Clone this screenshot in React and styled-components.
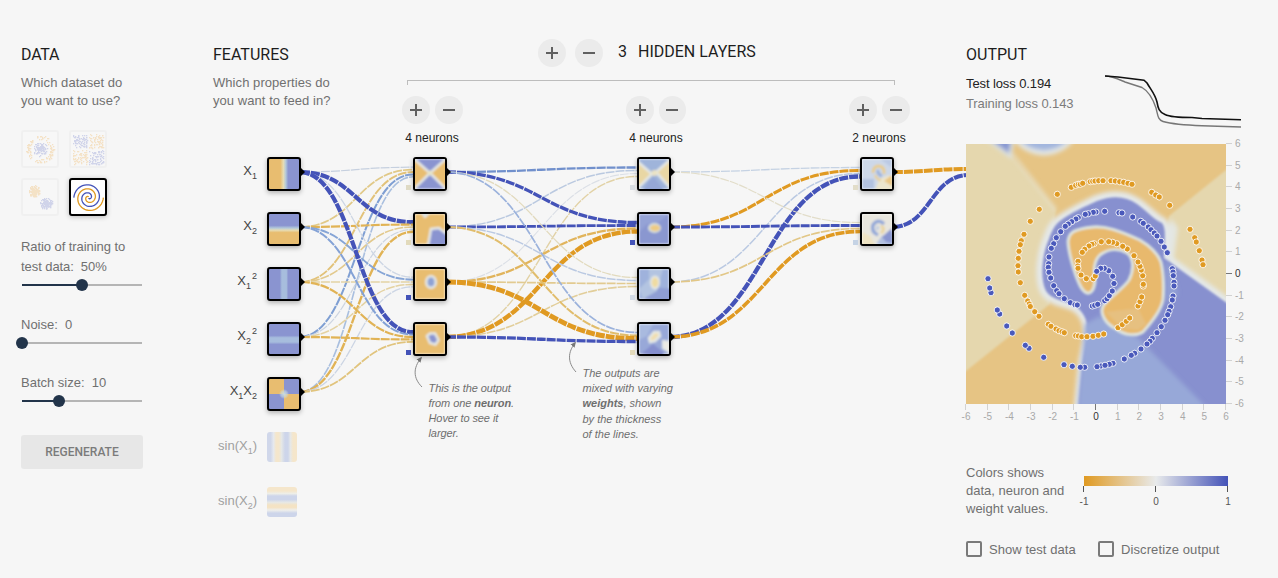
import React from "react";
import styled, { createGlobalStyle } from "styled-components";

const BLUE = "#4453b8";
const ORANGE = "#e09a22";
const HB = "#8a94d0";
const HO = "#e8bd70";
const PALE = "#e4e8e6";

const Global = createGlobalStyle`
  * { box-sizing: border-box; }
  body { margin: 0; background: #f6f6f6; font-family: "Liberation Sans", Arial, sans-serif; color: #6c6c6c; }
`;

const Page = styled.main`
  position: relative;
  display: flex;
  width: 1278px;
  height: 578px;
  overflow: hidden;
  background: #f6f6f6;
  font-size: 13px;
`;

const DataColumn = styled.section`
  display: flex;
  flex-direction: column;
  width: 213px;
  padding: 44px 0 0 21px;
`;
const FeatureColumn = styled.section`
  display: flex;
  flex-direction: column;
  width: 189px;
  padding-top: 44px;
`;
const NetworkColumn = styled.section`
  display: flex;
  flex-direction: column;
  width: 564px;
  padding-top: 39px;
`;
const OutputColumn = styled.section`
  display: flex;
  flex-direction: column;
  width: 312px;
  padding-top: 44px;
  position: relative;
`;

const Title = styled.h4`
  margin: 0;
  font: 400 16px/21px Roboto, sans-serif;
  color: #1d1d1d;
  letter-spacing: ${(p) => p.$spacing || "0"};
  white-space: pre;
`;
const Question = styled.p`
  margin: 9px 0 0;
  line-height: 18px;
  letter-spacing: 0.06px;
  color: #707070;
`;

const ThumbGrid = styled.div`
  display: grid;
  grid-template-columns: 38px 38px;
  gap: 10px;
  margin-top: 20px;
`;
const Thumb = styled.div`
  width: 38px;
  height: 38px;
  border: 2px solid ${(p) => (p.$selected ? "#000" : "#f0f0f0")};
  border-radius: 3px;
  background: ${(p) => (p.$selected ? "#fff" : "#f7f7f7")};
  box-shadow: ${(p) => (p.$selected ? "0 1px 5px rgba(0,0,0,0.25)" : "none")};
  svg { display: block; }
`;

const Control = styled.div`
  margin-top: ${(p) => p.$top}px;
  line-height: 20px;
  white-space: pre;
  letter-spacing: ${(p) => p.$spacing || "0"};
  color: #707070;
`;
const Track = styled.div`
  position: relative;
  width: 120px;
  height: 2px;
  margin: 7px 0 0 1px;
  background: linear-gradient(90deg, #22344a ${(p) => p.$fill}px, #b5b5b5 ${(p) => p.$fill}px);
`;
const Handle = styled.span`
  position: absolute;
  top: -5px;
  left: ${(p) => p.$at - 6}px;
  width: 12px;
  height: 12px;
  border-radius: 50%;
  background: #22344a;
`;
const Regenerate = styled.button`
  width: 122px;
  height: 34px;
  margin-top: 33px;
  padding: 0;
  border: 0;
  border-radius: 3px;
  background: #e7e7e7;
  font: 500 12px Roboto, sans-serif;
  color: #7b7b7b;
`;

const FeatureList = styled.div`
  display: flex;
  flex-direction: column;
  margin-top: 47px;
`;
const FeatureRow = styled.div`
  position: relative;
  z-index: 1;
  display: flex;
  align-items: flex-start;
  gap: 10px;
  height: 55px;
`;
const FeatureLabel = styled.div`
  width: 44px;
  line-height: 28px;
  font-size: 13px;
  text-align: right;
  color: ${(p) => (p.$off ? "#a0a0a0" : "#444")};
  white-space: nowrap;
  sub, sup { font-size: 9px; line-height: 0; position: relative; vertical-align: baseline; }
  sub { top: 4px; }
  sup { top: -6px; margin-left: 1px; }
`;

const Tile = styled.div`
  position: relative;
  flex: none;
  width: ${(p) => (p.$off ? 30 : 34)}px;
  height: ${(p) => (p.$off ? 30 : 34)}px;
  border: ${(p) => (p.$off ? "0" : "2px solid #000")};
  border-radius: 3px;
  background: ${(p) => p.$fill || "#fff"};
  box-shadow: ${(p) => (p.$off ? "none" : "0 2px 5px rgba(0,0,0,0.28)")};
  > svg { display: block; }
`;
const Tip = styled.span`
  position: absolute;
  left: 31px;
  top: 8px;
  border-left: 5px solid #000;
  border-top: 5px solid transparent;
  border-bottom: 5px solid transparent;
`;
const Bias = styled.span`
  position: absolute;
  left: -9px;
  top: 26px;
  width: 5px;
  height: 5px;
  background: ${(p) => p.$color};
`;

const LayerHeader = styled.div`
  display: flex;
  align-items: center;
  margin-left: 136px;
  height: 28px;
`;
const Round = styled.button`
  display: grid;
  place-items: center;
  width: 28px;
  height: 28px;
  margin: 0 ${(p) => p.$gap || 0}px 0 0;
  padding: 0;
  border: 0;
  border-radius: 50%;
  background: #ebebeb;
`;
const LayerTitle = styled(Title)`
  display: flex;
  gap: 11px;
  margin-top: -3px;
`;
const Bracket = styled.div`
  width: 488px;
  height: 5px;
  margin: 13px 0 0 5px;
  border: 1px solid #bdbdbd;
  border-bottom: 0;
`;
const Layers = styled.div`
  display: flex;
  gap: 163px;
  margin-top: 11px;
`;
const Layer = styled.div`
  position: relative;
  z-index: 1;
  width: ${(p) => p.$width}px;
`;
const Buttons = styled.div`
  display: flex;
`;
const Count = styled.div`
  width: 60px;
  margin-top: 5px;
  font-size: 12px;
  line-height: 18px;
  color: #222;
  text-align: center;
`;
const NodeStack = styled.div`
  display: flex;
  flex-direction: column;
  gap: 21px;
  margin: 10px 0 0 11px;
`;

const Links = styled.svg`
  position: absolute;
  left: 0;
  top: 0;
`;
const Callout = styled.div`
  position: absolute;
  left: ${(p) => p.$x}px;
  top: ${(p) => p.$y}px;
  font-size: 11px;
  font-style: italic;
  line-height: ${(p) => p.$line}px;
  letter-spacing: ${(p) => p.$spacing || "0"};
  color: #6e6e6e;
  white-space: nowrap;
`;

const OutputHead = styled.div`
  display: flex;
  justify-content: space-between;
  height: 79px;
  width: 276px;
`;
const Loss = styled.div`
  line-height: 20px;
  letter-spacing: -0.1px;
  color: ${(p) => p.$color};
`;
const LossList = styled.div`
  margin-top: 9px;
`;
const LossChart = styled.svg`
  margin-top: 26px;
`;
const Plot = styled.svg`
  display: block;
  overflow: visible;
  margin-top: 21px;
  position: relative;
  z-index: 1;
`;
const LegendRow = styled.div`
  display: flex;
  margin-top: 60px;
`;
const LegendText = styled.div`
  width: 110px;
  line-height: 18px;
  color: #707070;
`;
const Checks = styled.div`
  display: flex;
  margin-top: 22px;
`;
const Check = styled.label`
  display: flex;
  align-items: center;
  width: 132px;
  gap: 7px;
  height: 18px;
  letter-spacing: ${(p) => p.$spacing};
  color: #707070;
  white-space: nowrap;
`;
const Box = styled.span`
  width: 16px;
  height: 16px;
  border: 2px solid #7a7a7a;
  border-radius: 2px;
`;

function Sign({ plus }) {
  return (
    <svg width="12" height="12" viewBox="0 0 12 12" stroke="#606060" strokeWidth="2">
      <path d={plus ? "M0 6H12M6 0V12" : "M0 6H12"} />
    </svg>
  );
}

/* ---- dataset thumbnails ---- */
function random(seed) {
  let s = seed;
  return () => {
    s = (s * 16807) % 2147483647;
    return s / 2147483647;
  };
}
function blob(seed, n, cx, cy, r) {
  const rnd = random(seed);
  return Array.from({ length: n }, () => {
    const a = rnd() * Math.PI * 2;
    const d = rnd() * r;
    return [Math.round(cx + d * Math.cos(a)), Math.round(cy + d * Math.sin(a))];
  });
}
function ring(seed, n, cx, cy, r0, r1) {
  const rnd = random(seed);
  return Array.from({ length: n }, () => {
    const a = rnd() * Math.PI * 2;
    const d = r0 + rnd() * (r1 - r0);
    return [Math.round(cx + d * Math.cos(a)), Math.round(cy + d * Math.sin(a))];
  });
}
function square(seed, n, x, y, w) {
  const rnd = random(seed);
  return Array.from({ length: n }, () => [Math.round(x + rnd() * w), Math.round(y + rnd() * w)]);
}
const Specks = ({ pts, color }) => pts.map(([x, y], i) => <rect key={i} x={x} y={y} width="1.3" height="1.3" fill={color} />);
const PB = "#d0d4ea";
const PO = "#f4e2c6";

function spiral(turn) {
  const pts = [];
  for (let i = 0; i <= 70; i++) {
    const t = (i / 70) * 3.5 * Math.PI;
    const r = 14.2 * (1 - i / 70) + 0.6;
    pts.push(`${(17.6 + r * Math.cos(t + turn)).toFixed(2)},${(17.6 + r * Math.sin(t + turn)).toFixed(2)}`);
  }
  return pts.join(" ");
}

function Datasets() {
  return (
    <ThumbGrid>
      <Thumb>
        <svg width="34" height="34">
          <Specks pts={ring(17, 110, 17, 17, 10, 14)} color={PO} />
          <Specks pts={blob(23, 110, 17, 17, 7)} color={PB} />
        </svg>
      </Thumb>
      <Thumb>
        <svg width="34" height="34">
          <Specks pts={square(5, 75, 2, 2, 14)} color={PB} />
          <Specks pts={square(7, 75, 18, 2, 14)} color={PO} />
          <Specks pts={square(11, 75, 2, 18, 14)} color={PO} />
          <Specks pts={square(13, 75, 18, 18, 14)} color={PB} />
        </svg>
      </Thumb>
      <Thumb>
        <svg width="34" height="34">
          <Specks pts={blob(31, 150, 11, 11, 6)} color={PO} />
          <Specks pts={blob(37, 150, 23, 23, 6)} color={PB} />
        </svg>
      </Thumb>
      <Thumb $selected>
        <svg width="34" height="34" fill="none" strokeWidth="1.3">
          <polyline points={spiral(0)} stroke={ORANGE} />
          <polyline points={spiral(Math.PI)} stroke={BLUE} />
        </svg>
      </Thumb>
    </ThumbGrid>
  );
}

/* ---- feature tiles ---- */
const cross = `radial-gradient(circle at 50% 50%, #c9dbe0 0, rgba(201,219,224,0.6) 3px, transparent 5px),
  conic-gradient(${HB} 0 88deg, #b9bfa0 90deg, ${HO} 92deg 178deg, #b9bfa0 180deg, ${HB} 182deg 268deg, #b9bfa0 270deg, ${HO} 272deg 358deg, #b9bfa0 360deg)`;
const features = [
  { label: <>X<sub>1</sub></>, fill: `linear-gradient(90deg, ${HO} 38%, #e6dcb4 48%, #b3c9da 56%, ${HB} 64%)` },
  { label: <>X<sub>2</sub></>, fill: `linear-gradient(180deg, ${HB} 38%, #b3c9da 47%, #e6dcb4 54%, ${HO} 62%)` },
  { label: <>X<sub>1</sub><sup>2</sup></>, fill: `linear-gradient(90deg, ${HB} 36%, #a7bddd 43% 58%, ${HB} 64%)` },
  { label: <>X<sub>2</sub><sup>2</sup></>, fill: `linear-gradient(180deg, ${HB} 38%, #a7bddd 46% 60%, ${HB} 68%)` },
  { label: <>X<sub>1</sub>X<sub>2</sub></>, fill: cross },
  { off: true, label: <>sin(X<sub>1</sub>)</>, fill: "linear-gradient(90deg, #d0d7ea 12%, #e6e9ee 22%, #f4e6cc 30% 40%, #e6e8e6 48%, #cdd5ea 60% 70%, #e6e8e8 78%, #f5e6cb 87%)" },
  { off: true, label: <>sin(X<sub>2</sub>)</>, fill: "linear-gradient(180deg, #f5e6cb 13%, #eeeee8 22%, #cdd5ea 30% 42%, #e6e8e6 51%, #f4e3c4 60% 68%, #efefec 77%, #cdd5ea 87%)" },
];

/* ---- hidden neuron pictures ---- */
const art = {
  a0: (
    <>
      <rect width="30" height="30" fill={HB} />
      <path d="M-3 -2L15 14L-3 32Z M33 -2L15 14L33 32Z" fill={HO} stroke={PALE} strokeWidth="2.5" />
      <circle cx="15" cy="14" r="2.5" fill="#e6e4c8" />
    </>
  ),
  a1: (
    <>
      <rect width="30" height="30" fill={HO} />
      <path d="M13 32L16 15L24 14L33 21V33Z" fill={HB} stroke={PALE} strokeWidth="2.5" />
      <path d="M6 -2L10 3L15 -2Z" fill="#cdd9dc" stroke={PALE} strokeWidth="2" />
    </>
  ),
  a2: (
    <>
      <rect width="30" height="30" fill={HO} />
      <ellipse cx="16" cy="13" rx="6" ry="7" fill={PALE} />
      <ellipse cx="16" cy="13" rx="3.500" ry="4.500" fill="#8fa2d4" />
    </>
  ),
  a3: (
    <>
      <rect width="30" height="30" fill={HO} />
      <path d="M12 12L15 9.500L20 9.500L23.500 16L20.500 20.500L15 19Z" fill={HB} stroke={PALE} strokeWidth="2.5" />
    </>
  ),
  b0: (
    <>
      <rect width="30" height="30" fill="#9fb4da" />
      <path d="M-3 1L13 15L-3 31Z M33 -1L17 13L33 31Z" fill="#e9d7a4" stroke={PALE} strokeWidth="2.5" />
      <path d="M10 22L15 18L25 32H4Z" fill="#96a8d7" />
      <circle cx="15.500" cy="14" r="3" fill="#ebe3c4" />
    </>
  ),
  b1: (
    <>
      <rect width="30" height="30" fill="#8a97d0" />
      <path d="M0 0H30L20 8L8 10L0 18Z" fill="#95a3d6" />
      <ellipse cx="15.500" cy="14" rx="6.500" ry="5" fill="#d5dfe0" />
      <ellipse cx="16" cy="14" rx="5" ry="3.300" fill="#edcb84" />
    </>
  ),
  b2: (
    <>
      <rect width="30" height="30" fill="#9fb2dc" />
      <path d="M2 30L14 18L33 20V33Z" fill="#8f9ed4" />
      <path d="M0 20L10 10V0H24L18 22L4 30Z" fill="#b3c4e1" />
      <ellipse cx="16" cy="13.500" rx="5" ry="7" fill={PALE} />
      <ellipse cx="16" cy="13.500" rx="3.300" ry="5" fill="#efdba2" />
    </>
  ),
  b3: (
    <>
      <rect width="30" height="30" fill="#98a8d8" />
      <path d="M2 30L14 20L24 28V33Z" fill="#858fce" />
      <path d="M0 0H14L8 12L0 16Z" fill="#a9badf" />
      <path d="M10 14L15 8L20 8L21 12L16 17L11 18Z" fill="#f0deb0" stroke={PALE} strokeWidth="2.500" />
      <path d="M24 17L33 18V30L24 24Z" fill="#ecebe4" stroke={PALE} strokeWidth="2" />
    </>
  ),
  c0: (
    <>
      <rect width="30" height="30" fill="#cdd8e8" />
      <path d="M0 20H12V30H0Z" fill="#b2c2e0" />
      <path d="M18 0H30V9Z" fill="#bccae4" />
      <path d="M13 32L17 20L27 16L33 20V32Z" fill="#ece5cd" />
      <path d="M22 22L30 16V27Z" fill="#eac683" />
      <path d="M11 14Q11 7 17 7Q23 8 22 15" fill="none" stroke="#e9cd90" strokeWidth="3" />
      <path d="M13 16Q15 21 19 21" fill="none" stroke="#e8d09c" strokeWidth="2.500" />
      <path d="M16 11Q15 15 20 17" fill="none" stroke="#9db2db" strokeWidth="3" />
    </>
  ),
  c1: (
    <>
      <rect width="30" height="30" fill="#e8e6de" />
      <path d="M0 18L8 22L14 32H0Z" fill="#eee3c3" />
      <path d="M14 30L20 22L33 18V33Z" fill="#b3c1e0" />
      <path d="M20 23L30 14V29L24 28Z" fill="#8a96d0" />
      <path d="M16 21Q9 18 11 11Q16 4 22 10" fill="none" stroke="#93a8d8" strokeWidth="3.500" />
      <path d="M16 12L15 16" fill="none" stroke="#c2cee2" strokeWidth="3" />
      <path d="M19 12Q24 15 19 19" fill="none" stroke="#ead5a0" strokeWidth="3" />
    </>
  ),
};

function Neuron({ kind, bias }) {
  return (
    <Tile>
      <svg width="30" height="30">
        <g filter="url(#soften)">{art[kind]}</g>
      </svg>
      <Bias $color={bias} />
      <Tip />
    </Tile>
  );
}

const layers = [
  { width: 61, count: "4 neurons", nodes: [["a0", "#dfdac4"], ["a1", "#e2dabb"], ["a2", BLUE], ["a3", BLUE]] },
  { width: 60, count: "4 neurons", nodes: [["b0", "#d8dde2"], ["b1", BLUE], ["b2", "#d2dae6"], ["b3", "#e3dabb"]] },
  { width: 61, count: "2 neurons", nodes: [["c0", "#e2ddc9"], ["c1", "#c5d3e5"]] },
];

/* ---- connections: for each target, one [colour, width] per source ---- */
const stages = [
  {
    from: 299, to: 413,
    targets: [
      [["#c6d0df", 1.2], ["#e1c988", 1.7], ["#e2c279", 1.9], ["#7f9fd3", 2], ["#a9bfdf", 1.6]],
      [[BLUE, 4.2], ["#e1b355", 2.2], ["#e2c98d", 1.6], ["#cdd5e1", 1.2], ["#e1b355", 2.4]],
      [["#cdd6e4", 1.3], ["#86a5d6", 1.9], ["#e3d3a5", 1.5], ["#e4d2a2", 1.5], ["#ccd5e4", 1.3]],
      [[BLUE, 4.2], ["#84a2d6", 2], ["#e1b355", 2.2], ["#e1b355", 2.2], ["#e1c47d", 1.8]],
    ],
  },
  {
    from: 445, to: 637,
    targets: [
      [["#7190cc", 2.3], ["#bac9e0", 1.5], ["#dbdfe6", 1.1], ["#e2d2a6", 1.4]],
      [[BLUE, 3.3], [BLUE, 2.8], ["#e1b45c", 2.3], [ORANGE, 4.4]],
      [["#e2dabd", 1.3], ["#bac9e2", 1.5], ["#e2ca90", 1.7], ["#e2ce9a", 1.6]],
      [["#9bb2dc", 1.7], ["#e1bd6c", 2], [ORANGE, 4.9], [BLUE, 3.3]],
    ],
  },
  {
    from: 669, to: 860,
    targets: [
      [["#c5d2e3", 1.3], [ORANGE, 3.1], ["#bac9e2", 1.5], [BLUE, 4.3]],
      [["#e2ddc9", 1.2], [BLUE, 2.9], ["#e2c787", 1.7], [ORANGE, 3.6]],
    ],
  },
  { from: 892, to: 969, targets: [[[ORANGE, 4], [BLUE, 4]]] },
];

function Connections() {
  const paths = [];
  stages.forEach(({ from, to, targets }, s) =>
    targets.forEach((sources, t) =>
      sources.forEach(([color, width], i) => {
        const y0 = 172 + 55 * i;
        const y1 = 172 + 55 * t + ((i - (sources.length - 1) / 2) / sources.length) * 12;
        const mid = (from + to) / 2;
        paths.push(
          <path key={`${s}-${t}-${i}`} d={`M${from} ${y0}C${mid} ${y0} ${mid} ${y1} ${to} ${y1}`} stroke={color} strokeWidth={width} />
        );
      })
    )
  );
  return (
    <Links width="1278" height="578" fill="none">
      <defs>
        <filter id="soften" x="-5%" y="-5%" width="110%" height="110%">
          <feGaussianBlur stdDeviation="0.8" />
        </filter>
        <marker id="head" markerWidth="7" markerHeight="7" refX="4" refY="3" orient="auto">
          <path d="M0 0.500L5.500 3L0 5.500Z" fill="#777" />
        </marker>
      </defs>
      <g strokeDasharray="9 1" strokeDashoffset="-1.8">{paths}</g>
      <g stroke="#8b8b8b" strokeWidth="1">
        <path d="M422 387C413 378 413 368 421 358" markerEnd="url(#head)" />
        <path d="M576 372C567 362 568 352 575 343" markerEnd="url(#head)" />
      </g>
    </Links>
  );
}

/* ---- output plot ---- */
const orangeDots = [
  [105.3, 43.3], [109.7, 41.3], [112.3, 40.3], [114.3, 40.3], [116.7, 39.3], [124.3, 37.7], [126.7, 37.3], [129, 37], [132.7, 36.7], [137, 36.7],
  [145, 36.7], [149.3, 37], [153.7, 37.7], [157.7, 38.3], [162, 39.3], [166, 40.3], [185.7, 48.3], [189.7, 51], [193.3, 53], [203.7, 61.3],
  [224, 85.3], [228.7, 93.7], [230.3, 98], [233.3, 106.7], [236, 116], [237, 120.7],
  [91.3, 50.3], [73.3, 65.3], [64.3, 77.3], [58, 90.3], [55.3, 96.7], [54.3, 100.7], [53, 107.3], [52.3, 114.3], [52, 121.7], [52.3, 128], [54.3, 138.7],
  [58.7, 151.3], [61.7, 157], [63.3, 160], [64.3, 162.5], [68.7, 167.7], [73, 172.3], [82.3, 180.3], [85, 182.3], [90, 185], [93, 186.7], [96, 187.7], [98.3, 188.7],
  [109.7, 191.7], [112.3, 192], [115.7, 192.7], [121, 192.7], [127, 192.3], [132.3, 191.3], [137.7, 190],
  [152, 183.7], [156.3, 180.7], [160.3, 177.3], [163.7, 174], [172, 162], [174, 157.7], [175.7, 153], [177.3, 142], [177.3, 140.3],
  [176.7, 131.7], [175.3, 126], [174, 122.3], [172, 118], [168, 111.7], [161.3, 105], [156.7, 102.3], [150.7, 99.7], [146.7, 98.3], [142.7, 97.7],
  [135.3, 97.7], [128, 99.7], [126, 100.3], [123, 102], [118.7, 105.3], [116.3, 108.3], [112, 117.3], [111.7, 122], [112, 124.3], [115, 131], [127.3, 134.7], [120.3, 134.7], [129.3, 132],
];
const blueDots = [
  [153, 68.7], [156, 69], [166.7, 73], [174.7, 77.3], [177.3, 79.3], [182.3, 83], [185, 85.7], [188.3, 89], [191, 92], [195, 97.3], [198.3, 103], [201.3, 108.7],
  [206.3, 124.7], [207, 128], [207.3, 131.7], [208, 138.3], [208, 142], [207, 152], [206.3, 156], [204.7, 162.7], [203, 167.3], [201.7, 170.7], [199, 176.3],
  [195.3, 182.7], [191, 188.7], [186.3, 194.3], [184, 197.3], [181, 200], [175, 205], [168.7, 209.3], [165.3, 211.3], [158.3, 215], [147, 219.3], [143.3, 220.3],
  [135, 222], [139, 221.3], [131, 222.7], [118.7, 223.3], [114.3, 223.3], [106.3, 222.3], [98, 220.7], [77.7, 213.3], [63, 204.3], [59.3, 201.3], [46.3, 189], [40.7, 182],
  [33.7, 170], [31.3, 166], [25, 148.7], [23.7, 144], [22, 134.7],
  [138.7, 67.3], [130, 68], [127.3, 68.3], [122.3, 69.7], [119.3, 70.3], [112.3, 73.7], [110, 75], [105.7, 77.7], [102.3, 80], [99.3, 82.3], [94.7, 87.7], [90.3, 93.7],
  [87.7, 99.7], [85.3, 104.3], [83, 113], [82.7, 119.7], [82.3, 123.3], [83, 128.3], [84.7, 134], [87.7, 141.7], [90.7, 146.7], [93, 149.7], [98.3, 154.7], [104.3, 158.7],
  [109, 160.7], [111.3, 161], [126.3, 162], [128.7, 161.3], [131.7, 160.3], [138.7, 156.7], [141, 154.7], [143.3, 151.7], [146.3, 147], [148, 139.5], [146.7, 132.3],
  [142.7, 126.7], [138.3, 124.3], [134.7, 124.3], [130.7, 127.3],
];
const Dots = ({ pts, color }) => pts.map(([x, y], i) => <circle key={i} cx={x} cy={y} r="3.1" fill={color} stroke="#fff" strokeOpacity="0.85" />);

const ticks = Array.from({ length: 13 }, (_, i) => i - 6);

function OutputPlot() {
  return (
    <Plot width="260" height="260" viewBox="0 0 260 260">
      <defs>
        <clipPath id="frame"><rect width="260" height="260" /></clipPath>
        <filter id="melt" x="-10%" y="-10%" width="120%" height="120%"><feGaussianBlur stdDeviation="2.2" /></filter>
        <filter id="edge" x="-10%" y="-10%" width="120%" height="120%"><feGaussianBlur stdDeviation="1.3" /></filter>
      </defs>
      <g clipPath="url(#frame)">
        <rect width="260" height="260" fill="#e6c484" />
        <g filter="url(#edge)">
          <path d="M-10 -10H18L46 12L90 66L84 110L84 160L74 168L-10 235Z" fill="#e5d7ae" />
          <path d="M270 18L203 72L190 120L270 170Z" fill="#e5d7ae" />
        </g>
        <g filter="url(#melt)">
          <path d="M46 10L90 66" stroke="#e7dfc4" strokeWidth="3" fill="none" />
          <path d="M20 -6L44 12L47 -6Z" fill="#8797d1" stroke="#dbe3e6" strokeWidth="3" />
          <path d="M48 -8Q58 8 78 9Q98 8 108 -8Z" fill="#a3b6de" stroke="#e2e6e4" strokeWidth="5" />
          <path d="M205 74L212 84L208 114L200 112Z" fill="#e4e6e0" />
          <path d="M92 75C105 66 118 60 130 54C146 48 160 49 172 57C182 64 190 73 198 77C204 85 201 96 200 112L272 164V272H110L115 219L120 193C121 179 117 170 107 164C95 159 84 159 77 148C70 133 74 108 80 94C83 84 86 79 92 75Z" fill="#e4e8e8" stroke="#e4e8e8" strokeWidth="6" />
        </g>
        <g filter="url(#edge)">
          <path d="M94 77C106 68 118 63 131 57C146 51 160 52 171 60C181 67 188 76 196 79C201 86 198 98 198 114L272 167V272H112L117 219L122 193C123 177 117 167 108 161C96 156 86 156 80 147C73 133 77 108 83 95C86 86 89 81 94 77Z" fill="#8790cf" />
        </g>
        <g filter="url(#melt)">
          <path d="M119 180L134 172L172 194L240 263H112Z" fill="#97a8d8" />
          <path d="M206 124L200 116L200 160L212 150Z" fill="#92a0d5" />
        </g>
        <g filter="url(#edge)">
          <path d="M102 97C103 88 108 85 127 83C140 82 152 86 174 96C184 102 192 110 195 118C198 130 198 148 197 156C195 167 186 178 177 188C170 193 158 191 150 185C140 180 133 170 137 162C142 154 156 146 163 136C168 126 168 114 161 109C152 104 142 105 134 111C127 118 128 128 129 138C128 146 125 150 121 149C116 148 113 140 110 132C106 120 102 108 102 97Z" fill="#e8b96d" stroke="#dde4de" strokeWidth="3" />
          <path d="M140 168L172 164L180 180L172 186L156 184Z" fill="#e6c080" />
        </g>
        <Dots pts={orangeDots} color={ORANGE} />
        <Dots pts={blueDots} color="#4a59bb" />
      </g>
      <g fontFamily="Liberation Sans, Arial, sans-serif" fontSize="10">
        {ticks.map((v) => {
          const p = 130 + (v * 260) / 12;
          const ink = v === 0 ? "#333" : "#a9a9a9";
          const rule = v === 0 ? "#777" : "#d2d2d2";
          return (
            <g key={v} fill={ink} stroke="none">
              <path d={`M${Math.round(p) - 0.5} 260V266M260 ${Math.round(260 - p) - 0.5}H266`} stroke={rule} />
              <text x={p} y="275.500" textAnchor="middle">{v}</text>
              <text x="269" y={260 - p + 3}>{v}</text>
            </g>
          );
        })}
      </g>
    </Plot>
  );
}

function Legend() {
  return (
    <svg width="160" height="44" fontFamily="Liberation Sans, Arial, sans-serif" fontSize="10">
      <defs>
        <linearGradient id="scale">
          <stop offset="0" stopColor={ORANGE} />
          <stop offset="0.5" stopColor="#e8eaeb" />
          <stop offset="1" stopColor={BLUE} />
        </linearGradient>
      </defs>
      <rect x="8" y="12" width="144" height="10" fill="url(#scale)" />
      <path d="M7.500 22V28M79.500 22V28M151.500 22V28" stroke="#555" />
      <g fill="#555" textAnchor="middle">
        <text x="8" y="41">-1</text>
        <text x="80" y="41">0</text>
        <text x="152" y="41">1</text>
      </g>
    </svg>
  );
}

export default function App() {
  return (
    <>
      <Global />
      <Page>
        <Connections />
        <DataColumn>
          <Title $spacing="-0.2px">DATA</Title>
          <Question>Which dataset do<br />you want to use?</Question>
          <Datasets />
          <Control $top={21} $spacing="-0.07px">Ratio of training to<br />{"test data:  50%"}</Control>
          <Track $fill={60}><Handle $at={60} /></Track>
          <Control $top={29}>{"Noise:  0"}</Control>
          <Track $fill={0}><Handle $at={0} /></Track>
          <Control $top={29}>{"Batch size:  10"}</Control>
          <Track $fill={37}><Handle $at={37} /></Track>
          <Regenerate>REGENERATE</Regenerate>
        </DataColumn>

        <FeatureColumn>
          <Title>FEATURES</Title>
          <Question>Which properties do<br />you want to feed in?</Question>
          <FeatureList>
            {features.map((f, i) => (
              <FeatureRow key={i}>
                <FeatureLabel $off={f.off}>{f.label}</FeatureLabel>
                <Tile $off={f.off} $fill={f.fill}>{!f.off && <Tip />}</Tile>
              </FeatureRow>
            ))}
          </FeatureList>
        </FeatureColumn>

        <NetworkColumn>
          <LayerHeader>
            <Round $gap={9}><Sign plus /></Round>
            <Round $gap={15}><Sign /></Round>
            <LayerTitle><span>3</span><span>HIDDEN LAYERS</span></LayerTitle>
          </LayerHeader>
          <Bracket />
          <Layers>
            {layers.map((l, i) => (
              <Layer key={i} $width={l.width}>
                <Buttons>
                  <Round $gap={5}><Sign plus /></Round>
                  <Round><Sign /></Round>
                </Buttons>
                <Count>{l.count}</Count>
                <NodeStack>
                  {l.nodes.map(([kind, bias]) => <Neuron key={kind} kind={kind} bias={bias} />)}
                </NodeStack>
              </Layer>
            ))}
          </Layers>
          <Callout $x={428.5} $y={381} $line={15} $spacing="-0.08px">
            This is the output<br />from one <b>neuron</b>.<br />Hover to see it<br />larger.
          </Callout>
          <Callout $x={582.5} $y={366} $line={15.2}>
            The outputs are<br />mixed with varying<br /><b>weights</b>, shown<br />by the thickness<br />of the lines.
          </Callout>
        </NetworkColumn>

        <OutputColumn>
          <OutputHead>
            <div>
              <Title>OUTPUT</Title>
              <LossList>
                <Loss $color="#222">Test loss 0.194</Loss>
                <Loss $color="#7c7c7c">Training loss 0.143</Loss>
              </LossList>
            </div>
            <LossChart width="138" height="62" fill="none" strokeWidth="1.4">
              <path d="M1 6C8 6 14 9 21 12L38 17.500C46 22 50 32 52 38C54 46 54 50 59 51.500C68 54 78 55 98 55.700L137 57" stroke="#777" />
              <path d="M1 6L14 7L40 10.200L43 13C47 20 51 24 53 32C54 38 55 42 61 44.500C66 47 74 47.500 88 47.500L98 48.500L137 49.700" stroke="#111" strokeWidth="1.6" />
            </LossChart>
          </OutputHead>
          <OutputPlot />
          <LegendRow>
            <LegendText>Colors shows<br />data, neuron and<br />weight values.</LegendText>
            <Legend />
          </LegendRow>
          <Checks>
            <Check $spacing="0.05px"><Box />Show test data</Check>
            <Check $spacing="0.1px"><Box />Discretize output</Check>
          </Checks>
        </OutputColumn>
      </Page>
    </>
  );
}
